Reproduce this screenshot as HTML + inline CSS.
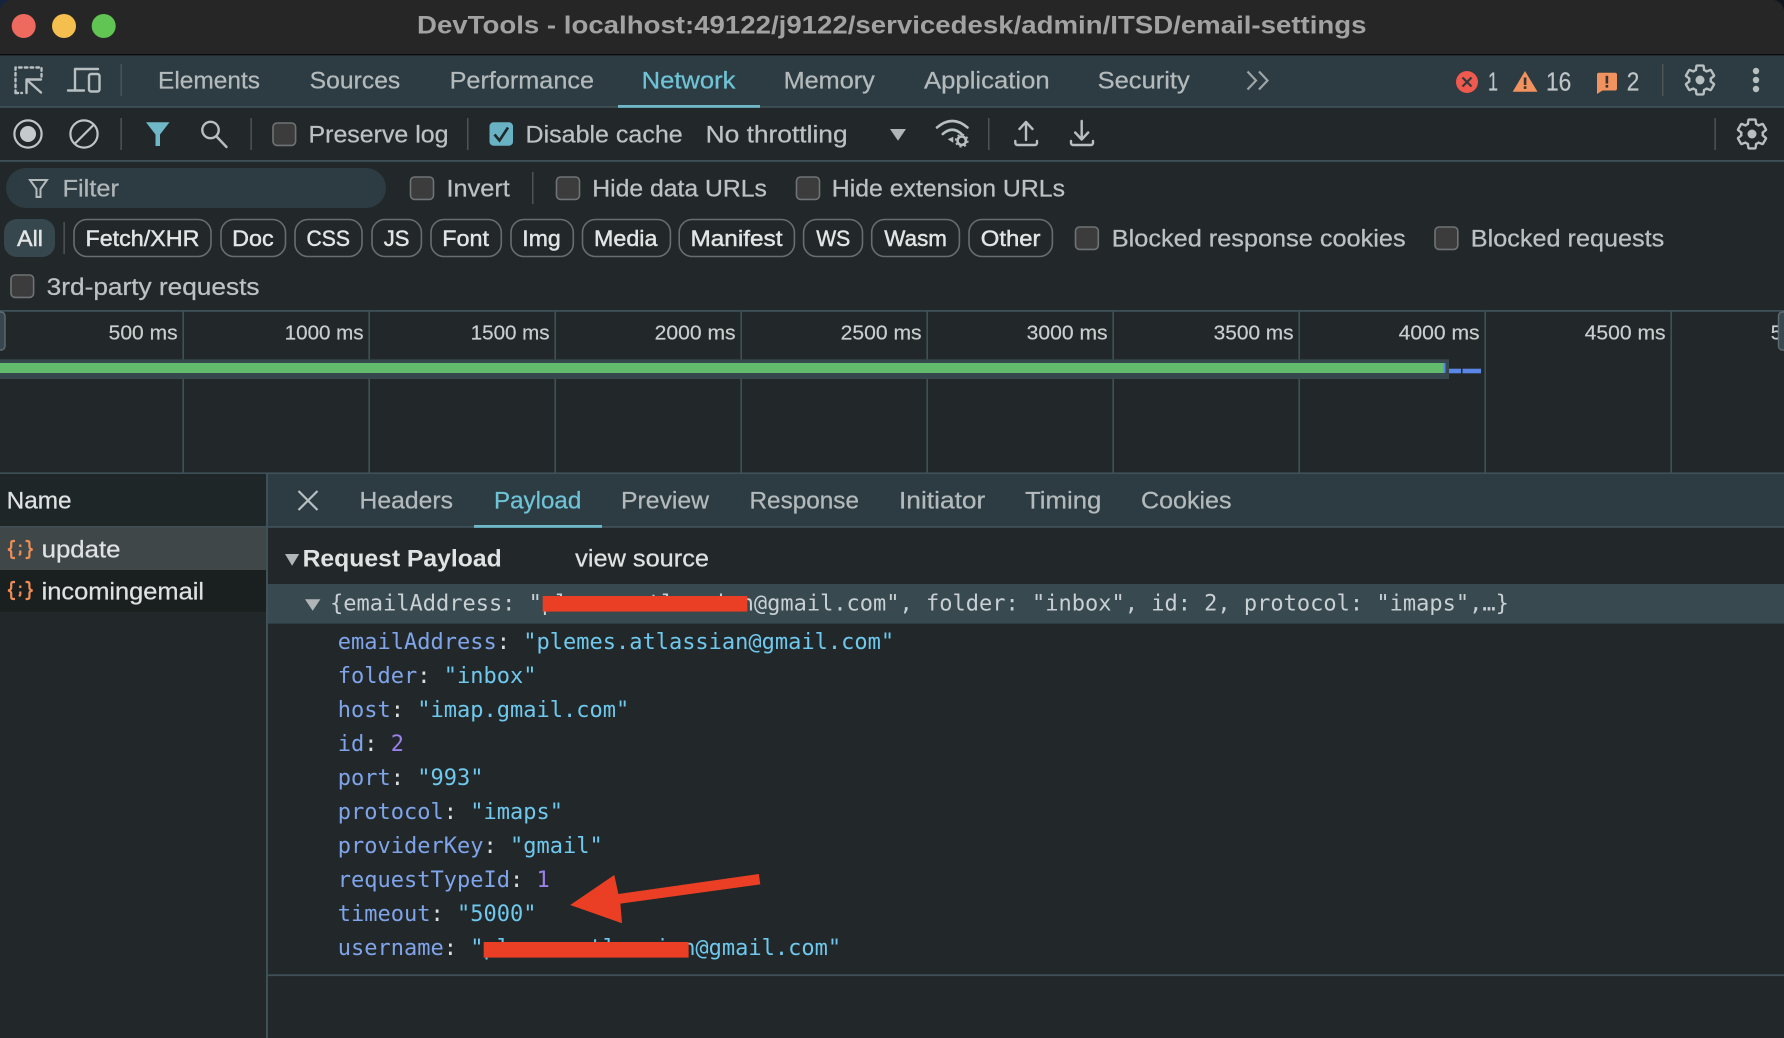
<!DOCTYPE html>
<html lang="en">
<head>
<meta charset="utf-8">
<title>DevTools</title>
<style>
html,body{margin:0;padding:0;background:#222829;width:1784px;height:1038px;overflow:hidden}
svg{display:block;position:absolute;left:0;top:0}
text{font-family:"Liberation Sans",Arial,sans-serif;white-space:pre}
.t{font-size:24.5px;fill:#b4babc;stroke:#b4babc;stroke-width:.25px}
.l{font-size:24px;fill:#bcc2c3;stroke:#bcc2c3;stroke-width:.25px}
.c{font-size:22.5px;fill:#e2e5e6;stroke:#e2e5e6;stroke-width:.45px}
.m{font-size:20px;fill:#c8cdce;stroke:#c8cdce;stroke-width:.2px}
.w{font-size:24px;fill:#dfe2e3;stroke:#dfe2e3;stroke-width:.25px}
.a{font-size:24.5px;fill:#6fc3d6;stroke:#6fc3d6;stroke-width:.25px}
.s{font-family:"DejaVu Sans Mono","Liberation Mono",monospace;font-size:22px}
.k{fill:#7fa4ea}.o{fill:#dcdfe0}.v{fill:#6fc8ee}.n{fill:#9a80ea}
.cb{fill:#3c3c3c;stroke:#6f7375;stroke-width:1.6}
.sep{fill:#4b5558}
.ic{fill:none;stroke:#b8bfc1;stroke-width:2.4;stroke-linecap:round;stroke-linejoin:round}
.chip{fill:none;stroke:#686e70;stroke-width:1.6}
.grid{fill:#3f5158}
.br{fill:none;stroke:#ee8d55;stroke-width:2.2}
</style>
</head>
<body>
<svg xmlns="http://www.w3.org/2000/svg" width="1784" height="1038" viewBox="0 0 1784 1038">
<!-- backgrounds -->
<rect width="1784" height="1038" fill="#222829"/>
<rect width="1784" height="54" fill="#262626"/>
<rect y="54" width="1784" height="1.4" fill="#0c0c0c"/>
<path d="M0 0h10Q2 2 0 10z" fill="#16233f"/>
<path d="M1784 0h-10Q1782 2 1784 10z" fill="#10141c"/>
<rect y="55.4" width="1784" height="51" fill="#2c3c42"/>
<rect y="106" width="1784" height="1.8" fill="#3f5158"/>
<rect y="160" width="1784" height="1.8" fill="#3f5158"/>

<!-- title -->
<circle cx="23.7" cy="26" r="12" fill="#ee6a5f"/>
<circle cx="64" cy="26" r="12" fill="#f5bf4f"/>
<circle cx="103.7" cy="26" r="12" fill="#61c554"/>
<text x="417" y="33.3" font-size="25" font-weight="700" fill="#a2a2a2" textLength="949.5" lengthAdjust="spacingAndGlyphs">DevTools - localhost:49122/j9122/servicedesk/admin/ITSD/email-settings</text>

<!-- top tabs -->
<path class="ic" stroke-dasharray="2.6 3.2" stroke-linecap="butt" d="M15.5 93V67.5H41.5V78"/>
<path class="ic" stroke-dasharray="2.6 3.2" stroke-linecap="butt" d="M15.5 93H22"/>
<path class="ic" d="M41 92.5L27 80M26.5 93V79.5H41"/>
<path class="ic" stroke-linecap="butt" stroke-width="2.8" d="M98 69H75V90M68 90.5H84"/>
<rect x="89" y="74" width="10.5" height="17.5" rx="2" class="ic" stroke-width="2.8"/>
<rect class="sep" x="120.4" y="64" width="1.5" height="32"/>
<text class="t" x="158" y="88.7" textLength="102" lengthAdjust="spacingAndGlyphs">Elements</text>
<text class="t" x="309.7" y="88.7" textLength="90.6" lengthAdjust="spacingAndGlyphs">Sources</text>
<text class="t" x="449.6" y="88.7" textLength="144.4" lengthAdjust="spacingAndGlyphs">Performance</text>
<text class="a" x="641.6" y="88.7" textLength="93.9" lengthAdjust="spacingAndGlyphs">Network</text>
<rect x="618" y="105" width="142" height="2.8" fill="#6fb8c8"/>
<text class="t" x="783.6" y="88.7" textLength="91.2" lengthAdjust="spacingAndGlyphs">Memory</text>
<text class="t" x="924" y="88.7" textLength="125.7" lengthAdjust="spacingAndGlyphs">Application</text>
<text class="t" x="1097.6" y="88.7" textLength="92.2" lengthAdjust="spacingAndGlyphs">Security</text>
<path d="M1247.5 71.5L1256 80.5L1247.5 89.5M1259 71.5L1267.5 80.5L1259 89.5" fill="none" stroke="#9ea5a8" stroke-width="2.2"/>

<circle cx="1467" cy="82" r="11" fill="#f0594d"/>
<path d="M1462.5 77.5L1471.5 86.5M1471.5 77.5L1462.5 86.5" stroke="#30393c" stroke-width="2.2"/>
<text class="t" x="1488" y="90.7" textLength="10" lengthAdjust="spacingAndGlyphs" style="fill:#c0c6c8;font-size:25.5px">1</text>
<path d="M1525 71L1537.5 91.7H1512.7z" fill="#f1925f"/>
<rect x="1523.8" y="77.5" width="2.6" height="7.5" fill="#3a3430"/>
<rect x="1523.8" y="86.3" width="2.6" height="2.6" fill="#3a3430"/>
<text class="t" x="1546" y="90.7" textLength="25.3" lengthAdjust="spacingAndGlyphs" style="fill:#c0c6c8;font-size:25.5px">16</text>
<path d="M1598.5 72.7H1615a2 2 0 0 1 2 2V88.5a2 2 0 0 1-2 2H1602.5L1597 94V74.2a1.7 1.7 0 0 1 1.5-1.5z" fill="#f1925f"/>
<rect x="1605.6" y="75.8" width="2.6" height="7.8" fill="#3a3430"/>
<rect x="1605.6" y="85" width="2.6" height="2.6" fill="#3a3430"/>
<text class="t" x="1626.8" y="90.7" textLength="12.6" lengthAdjust="spacingAndGlyphs" style="fill:#c0c6c8;font-size:25.5px">2</text>
<rect class="sep" x="1662" y="64" width="1.5" height="32"/>
<g transform="translate(1682,62) scale(1.5)">
<path d="M19.14 12.94c.04-.3.06-.61.06-.94 0-.32-.02-.64-.07-.94l2.03-1.58a.49.49 0 0 0 .12-.61l-1.92-3.32a.488.488 0 0 0-.59-.22l-2.39.96c-.5-.38-1.03-.7-1.62-.94l-.36-2.54a.484.484 0 0 0-.48-.41h-3.84c-.24 0-.43.17-.47.41l-.36 2.54c-.59.24-1.13.57-1.62.94l-2.39-.96c-.22-.08-.47 0-.59.22L2.74 8.87c-.12.21-.08.47.12.61l2.03 1.58c-.05.3-.09.63-.09.94s.02.64.07.94l-2.03 1.58a.49.49 0 0 0-.12.61l1.92 3.32c.12.22.37.29.59.22l2.39-.96c.5.38 1.03.7 1.62.94l.36 2.54c.05.24.24.41.48.41h3.84c.24 0 .44-.17.47-.41l.36-2.54c.59-.24 1.13-.56 1.62-.94l2.39.96c.22.08.47 0 .59-.22l1.92-3.32c.12-.22.07-.47-.12-.61l-2.01-1.58z" fill="none" stroke="#b8bfc1" stroke-width="1.6"/>
<circle cx="12" cy="12" r="3" fill="#b8bfc1"/>
</g>
<circle cx="1756" cy="71" r="3.2" fill="#b8bfc1"/>
<circle cx="1756" cy="80" r="3.2" fill="#b8bfc1"/>
<circle cx="1756" cy="89" r="3.2" fill="#b8bfc1"/>

<!-- row 2 -->
<circle cx="28" cy="134" r="13.6" fill="none" stroke="#c0c5c7" stroke-width="2.2"/>
<circle cx="28" cy="134" r="8" fill="#c5cacc"/>
<circle cx="84" cy="134" r="13.6" fill="none" stroke="#c0c5c7" stroke-width="2.2"/>
<path d="M75 143.5L93.5 125" stroke="#c0c5c7" stroke-width="2.2"/>
<rect class="sep" x="120.4" y="118" width="1.5" height="32"/>
<path d="M146 122.3H169.5L160 134.5V146H155.5V134.5z" fill="#6fb8c8"/>
<circle cx="210.5" cy="130" r="8.2" class="ic"/>
<path d="M216.5 136.5L226.5 147" class="ic"/>
<rect class="sep" x="250.4" y="118" width="1.5" height="32"/>
<rect class="cb" x="273" y="123" width="22.6" height="22.4" rx="4"/>
<text class="l" x="308.5" y="142.7" textLength="140" lengthAdjust="spacingAndGlyphs">Preserve log</text>
<rect class="sep" x="467" y="118" width="1.5" height="32"/>
<rect x="489.5" y="122.3" width="23.5" height="23.4" rx="4" fill="#68b2c4"/>
<path d="M494.5 134.5L499.5 140.5L508 127.5" fill="none" stroke="#1f282b" stroke-width="2.6"/>
<text class="l" x="525.5" y="142.7" textLength="157.2" lengthAdjust="spacingAndGlyphs">Disable cache</text>
<text class="l" x="705.6" y="142.7" textLength="142" lengthAdjust="spacingAndGlyphs">No throttling</text>
<path d="M890 129H906L898 140.7z" fill="#b0b6b8"/>
<path d="M937 127.5Q952.3 114.5 967.5 127.5M942.8 134Q952.3 125.5 961.5 134" fill="none" stroke="#b8bfc1" stroke-width="2.6" stroke-linecap="round"/>
<path d="M947.7 139.3L953.3 136.7V142.7z" fill="#b8bfc1"/>
<circle cx="961.7" cy="140.7" r="4.2" fill="none" stroke="#b8bfc1" stroke-width="2.6"/>
<circle cx="961.7" cy="140.7" r="6.2" fill="none" stroke="#b8bfc1" stroke-width="1.4" stroke-dasharray="2.2 2.7"/>
<rect class="sep" x="988" y="118" width="1.5" height="32"/>
<path d="M1026 122V140M1019.5 129L1026 122L1032.5 129" class="ic"/>
<path d="M1015.3 141V143a2 2 0 0 0 2 2H1035a2 2 0 0 0 2-2V141" class="ic"/>
<path d="M1081.7 121V139.5M1075.2 132.5L1081.7 139.5L1088.2 132.5" class="ic"/>
<path d="M1071 141V143a2 2 0 0 0 2 2H1091a2 2 0 0 0 2-2V141" class="ic"/>
<rect class="sep" x="1714.4" y="118" width="1.5" height="32"/>
<g transform="translate(1734,116) scale(1.5)">
<path d="M19.14 12.94c.04-.3.06-.61.06-.94 0-.32-.02-.64-.07-.94l2.03-1.58a.49.49 0 0 0 .12-.61l-1.92-3.32a.488.488 0 0 0-.59-.22l-2.39.96c-.5-.38-1.03-.7-1.62-.94l-.36-2.54a.484.484 0 0 0-.48-.41h-3.84c-.24 0-.43.17-.47.41l-.36 2.54c-.59.24-1.13.57-1.62.94l-2.39-.96c-.22-.08-.47 0-.59.22L2.74 8.87c-.12.21-.08.47.12.61l2.03 1.58c-.05.3-.09.63-.09.94s.02.64.07.94l-2.03 1.58a.49.49 0 0 0-.12.61l1.92 3.32c.12.22.37.29.59.22l2.39-.96c.5.38 1.03.7 1.62.94l.36 2.54c.05.24.24.41.48.41h3.84c.24 0 .44-.17.47-.41l.36-2.54c.59-.24 1.13-.56 1.62-.94l2.39.96c.22.08.47 0 .59-.22l1.92-3.32c.12-.22.07-.47-.12-.61l-2.01-1.58z" fill="none" stroke="#b8bfc1" stroke-width="1.6"/>
<circle cx="12" cy="12" r="3" fill="#b8bfc1"/>
</g>

<!-- row 3 -->
<rect x="6" y="168" width="380" height="40" rx="20" fill="#2c3c42"/>
<path d="M30 180H47L40.5 189V197H36.5V189z" fill="none" stroke="#b4babc" stroke-width="2"/>
<text class="l" x="62.5" y="196.7" textLength="56.5" lengthAdjust="spacingAndGlyphs" style="fill:#b0b6b8;stroke:#b0b6b8">Filter</text>
<rect class="cb" x="410.5" y="177" width="23" height="22.4" rx="4"/>
<text class="l" x="446.5" y="196.7" textLength="63.3" lengthAdjust="spacingAndGlyphs">Invert</text>
<rect class="sep" x="532" y="172" width="1.5" height="32"/>
<rect class="cb" x="556.5" y="177" width="23" height="22.4" rx="4"/>
<text class="l" x="592.3" y="196.7" textLength="174.6" lengthAdjust="spacingAndGlyphs">Hide data URLs</text>
<rect class="cb" x="796.5" y="177" width="23" height="22.4" rx="4"/>
<text class="l" x="831.8" y="196.7" textLength="233.2" lengthAdjust="spacingAndGlyphs">Hide extension URLs</text>

<!-- row 4 chips -->
<rect x="4" y="219" width="51" height="38" rx="13" fill="#36474d"/>
<text class="c" x="17" y="246" textLength="26" lengthAdjust="spacingAndGlyphs">All</text>
<rect class="sep" x="63.4" y="222" width="1.5" height="32"/>
<rect class="chip" x="74" y="219.5" width="137" height="37" rx="13"/>
<text class="c" x="85.5" y="246" textLength="113.9" lengthAdjust="spacingAndGlyphs">Fetch/XHR</text>
<rect class="chip" x="221" y="219.5" width="64.5" height="37" rx="13"/>
<text class="c" x="232.2" y="246" textLength="41.4" lengthAdjust="spacingAndGlyphs">Doc</text>
<rect class="chip" x="295" y="219.5" width="67" height="37" rx="13"/>
<text class="c" x="306.5" y="246" textLength="43.5" lengthAdjust="spacingAndGlyphs">CSS</text>
<rect class="chip" x="372" y="219.5" width="49.4" height="37" rx="13"/>
<text class="c" x="383.8" y="246" textLength="25.7" lengthAdjust="spacingAndGlyphs">JS</text>
<rect class="chip" x="431" y="219.5" width="70.3" height="37" rx="13"/>
<text class="c" x="442.3" y="246" textLength="46.7" lengthAdjust="spacingAndGlyphs">Font</text>
<rect class="chip" x="511" y="219.5" width="62.3" height="37" rx="13"/>
<text class="c" x="522.3" y="246" textLength="38.4" lengthAdjust="spacingAndGlyphs">Img</text>
<rect class="chip" x="582.5" y="219.5" width="87.9" height="37" rx="13"/>
<text class="c" x="594" y="246" textLength="63.4" lengthAdjust="spacingAndGlyphs">Media</text>
<rect class="chip" x="679.2" y="219.5" width="115.2" height="37" rx="13"/>
<text class="c" x="690.5" y="246" textLength="92" lengthAdjust="spacingAndGlyphs">Manifest</text>
<rect class="chip" x="803.6" y="219.5" width="58.9" height="37" rx="13"/>
<text class="c" x="816.2" y="246" textLength="34.1" lengthAdjust="spacingAndGlyphs">WS</text>
<rect class="chip" x="871.7" y="219.5" width="87.7" height="37" rx="13"/>
<text class="c" x="884.3" y="246" textLength="62.7" lengthAdjust="spacingAndGlyphs">Wasm</text>
<rect class="chip" x="969" y="219.5" width="83.4" height="37" rx="13"/>
<text class="c" x="980.8" y="246" textLength="59.7" lengthAdjust="spacingAndGlyphs">Other</text>
<rect class="cb" x="1075.5" y="227" width="22.8" height="22.4" rx="4"/>
<text class="l" x="1111.8" y="246.7" textLength="293.8" lengthAdjust="spacingAndGlyphs">Blocked response cookies</text>
<rect class="cb" x="1435" y="227" width="22.8" height="22.4" rx="4"/>
<text class="l" x="1470.8" y="246.7" textLength="193.5" lengthAdjust="spacingAndGlyphs">Blocked requests</text>

<!-- row 5 -->
<rect class="cb" x="11" y="275" width="22.6" height="22.4" rx="4"/>
<text class="l" x="46.7" y="295" textLength="212.8" lengthAdjust="spacingAndGlyphs">3rd-party requests</text>

<!-- timeline -->
<rect y="310" width="1784" height="1.8" fill="#3f5158"/>
<rect class="grid" x="182.4" y="311" width="1.6" height="162"/>
<rect class="grid" x="368.4" y="311" width="1.6" height="162"/>
<rect class="grid" x="554.4" y="311" width="1.6" height="162"/>
<rect class="grid" x="740.4" y="311" width="1.6" height="162"/>
<rect class="grid" x="926.4" y="311" width="1.6" height="162"/>
<rect class="grid" x="1112.4" y="311" width="1.6" height="162"/>
<rect class="grid" x="1298.4" y="311" width="1.6" height="162"/>
<rect class="grid" x="1484.4" y="311" width="1.6" height="162"/>
<rect class="grid" x="1670.4" y="311" width="1.6" height="162"/>
<rect x="-6" y="312" width="11" height="38" rx="4" fill="#36474d" stroke="#5f6b70" stroke-width="1.4"/>
<text class="m" x="108.7" y="339.3" textLength="68.9" lengthAdjust="spacingAndGlyphs">500 ms</text>
<text class="m" x="284.7" y="339.3" textLength="78.9" lengthAdjust="spacingAndGlyphs">1000 ms</text>
<text class="m" x="470.7" y="339.3" textLength="78.9" lengthAdjust="spacingAndGlyphs">1500 ms</text>
<text class="m" x="654.7" y="339.3" textLength="80.9" lengthAdjust="spacingAndGlyphs">2000 ms</text>
<text class="m" x="840.7" y="339.3" textLength="80.9" lengthAdjust="spacingAndGlyphs">2500 ms</text>
<text class="m" x="1026.7" y="339.3" textLength="80.9" lengthAdjust="spacingAndGlyphs">3000 ms</text>
<text class="m" x="1213.7" y="339.3" textLength="79.9" lengthAdjust="spacingAndGlyphs">3500 ms</text>
<text class="m" x="1398.7" y="339.3" textLength="80.9" lengthAdjust="spacingAndGlyphs">4000 ms</text>
<text class="m" x="1584.7" y="339.3" textLength="80.9" lengthAdjust="spacingAndGlyphs">4500 ms</text>
<text class="m" x="1770.7" y="339.3">5</text>
<rect x="1778.5" y="312" width="11" height="38" rx="4" fill="#36474d" stroke="#5f6b70" stroke-width="1.4"/>
<rect y="359.3" width="1449" height="19.7" fill="#36474d"/>
<rect y="363" width="1443.5" height="10" fill="#62bc6c"/>
<rect x="1443.5" y="363" width="2" height="10" fill="#5a86e6"/>
<rect x="1449" y="368.7" width="12" height="4.6" fill="#5a86e6"/>
<rect x="1462.5" y="368.7" width="18.5" height="4.6" fill="#5a86e6"/>
<rect y="472.4" width="1784" height="1.8" fill="#3f5158"/>

<!-- left panel -->
<rect y="474" width="266" height="52" fill="#1f2628"/>
<rect y="526" width="266" height="1.6" fill="#3f4f55"/>
<rect y="527.5" width="266" height="42.5" fill="#404749"/>
<rect y="570" width="266" height="41.7" fill="#1a1f20"/>
<rect x="266" y="474" width="2" height="564" fill="#3f5158"/>
<text class="w" x="6.6" y="508.3" textLength="65" lengthAdjust="spacingAndGlyphs">Name</text>
<path class="br" d="M15 541H13.2Q11.2 541 11.2 543V546.5Q11.2 549 8 549.5Q11.2 550 11.2 552.5V556Q11.2 558 13.2 558H15"/>
<path class="br" d="M25.6 541H27.4Q29.4 541 29.4 543V546.5Q29.4 549 32.6 549.5Q29.4 550 29.4 552.5V556Q29.4 558 27.4 558H25.6"/>
<path class="br" d="M20.3 544.5V547M20.3 550.5V553.5L19.2 555.5"/>
<text class="w" x="41.6" y="557.7" textLength="78.9" lengthAdjust="spacingAndGlyphs">update</text>
<path class="br" d="M15 582H13.2Q11.2 582 11.2 584V587.5Q11.2 590 8 590.5Q11.2 591 11.2 593.5V597Q11.2 599 13.2 599H15"/>
<path class="br" d="M25.6 582H27.4Q29.4 582 29.4 584V587.5Q29.4 590 32.6 590.5Q29.4 591 29.4 593.5V597Q29.4 599 27.4 599H25.6"/>
<path class="br" d="M20.3 585.5V588M20.3 591.5V594.5L19.2 596.5"/>
<text class="w" x="41.6" y="599.3" textLength="162.4" lengthAdjust="spacingAndGlyphs">incomingemail</text>

<!-- detail tabs -->
<rect x="268" y="474" width="1516" height="52" fill="#2c3c42"/>
<rect x="268" y="526" width="1516" height="1.8" fill="#3f5158"/>
<path d="M298.5 491L317.5 510M317.5 491L298.5 510" stroke="#b8bfc1" stroke-width="2.2"/>
<text class="t" x="359.5" y="508.3" textLength="93.5" lengthAdjust="spacingAndGlyphs">Headers</text>
<text class="a" x="494" y="508.3" textLength="87.3" lengthAdjust="spacingAndGlyphs">Payload</text>
<rect x="474" y="525" width="128" height="2.8" fill="#6fb8c8"/>
<text class="t" x="621" y="508.3" textLength="88" lengthAdjust="spacingAndGlyphs">Preview</text>
<text class="t" x="749.5" y="508.3" textLength="109.5" lengthAdjust="spacingAndGlyphs">Response</text>
<text class="t" x="899" y="508.3" textLength="86.3" lengthAdjust="spacingAndGlyphs">Initiator</text>
<text class="t" x="1025" y="508.3" textLength="76.4" lengthAdjust="spacingAndGlyphs">Timing</text>
<text class="t" x="1141" y="508.3" textLength="90.5" lengthAdjust="spacingAndGlyphs">Cookies</text>

<!-- payload -->
<path d="M285 554H299.2L292.1 565.7z" fill="#b0b6b8"/>
<text x="302.6" y="566.7" font-size="24" font-weight="700" fill="#e0e3e4" textLength="199.1" lengthAdjust="spacingAndGlyphs">Request Payload</text>
<text class="w" x="575.2" y="566.7" textLength="133.8" lengthAdjust="spacingAndGlyphs">view source</text>
<rect x="268" y="584" width="1516" height="39.6" fill="#38494f"/>
<path d="M305 599.3H320.4L312.7 610.7z" fill="#b0b6b8"/>
<text class="s" x="330" y="610.7" fill="#c8d0d4" xml:space="preserve">{emailAddress: "plemes.atlassian@gmail.com", folder: "inbox", id: 2, protocol: "imaps",…}</text>
<rect x="542.7" y="596" width="204.6" height="15.6" fill="#ea3f24"/>

<text class="s" x="337.8" y="649" xml:space="preserve"><tspan class="k">emailAddress</tspan><tspan class="o">: </tspan><tspan class="v">"plemes.atlassian@gmail.com"</tspan></text>
<text class="s" x="337.8" y="683" xml:space="preserve"><tspan class="k">folder</tspan><tspan class="o">: </tspan><tspan class="v">"inbox"</tspan></text>
<text class="s" x="337.8" y="717" xml:space="preserve"><tspan class="k">host</tspan><tspan class="o">: </tspan><tspan class="v">"imap.gmail.com"</tspan></text>
<text class="s" x="337.8" y="751" xml:space="preserve"><tspan class="k">id</tspan><tspan class="o">: </tspan><tspan class="n">2</tspan></text>
<text class="s" x="337.8" y="785" xml:space="preserve"><tspan class="k">port</tspan><tspan class="o">: </tspan><tspan class="v">"993"</tspan></text>
<text class="s" x="337.8" y="819" xml:space="preserve"><tspan class="k">protocol</tspan><tspan class="o">: </tspan><tspan class="v">"imaps"</tspan></text>
<text class="s" x="337.8" y="853" xml:space="preserve"><tspan class="k">providerKey</tspan><tspan class="o">: </tspan><tspan class="v">"gmail"</tspan></text>
<text class="s" x="337.8" y="887" xml:space="preserve"><tspan class="k">requestTypeId</tspan><tspan class="o">: </tspan><tspan class="n">1</tspan></text>
<text class="s" x="337.8" y="921" xml:space="preserve"><tspan class="k">timeout</tspan><tspan class="o">: </tspan><tspan class="v">"5000"</tspan></text>
<text class="s" x="337.8" y="955" xml:space="preserve"><tspan class="k">username</tspan><tspan class="o">: </tspan><tspan class="v">"plemes.atlassian@gmail.com"</tspan></text>
<rect x="483.7" y="942" width="204.9" height="15.6" fill="#ea3f24"/>
<polygon points="570.2,905 614.3,875 618.4,894 758.8,874 760.3,884.4 620.4,903.6 622,923.3" fill="#ea3f24"/>
<rect x="268" y="974.3" width="1516" height="1.8" fill="#3f5158"/>
</svg>
</body>
</html>
